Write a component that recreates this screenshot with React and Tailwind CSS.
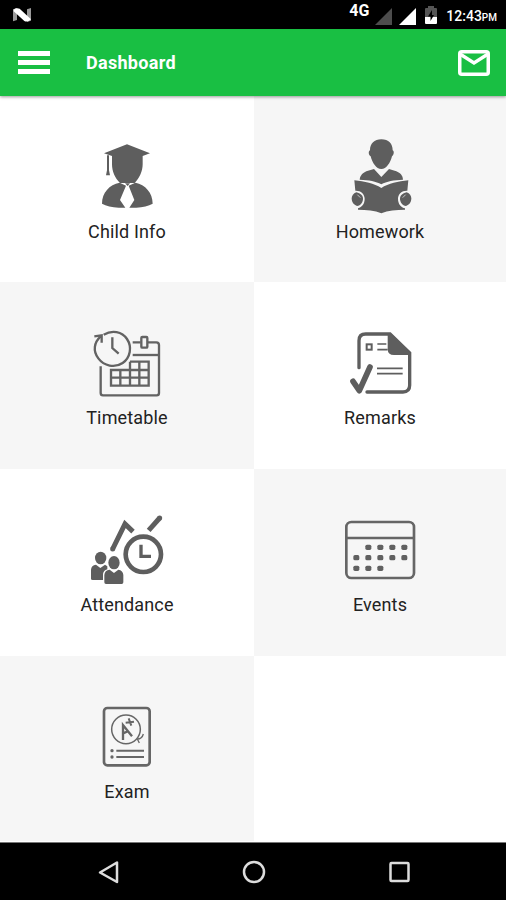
const ChildIcon = () => (
  <svg viewBox="3 0 300 270" className="h-[90px] w-[100px]" fill="#5e5e5e">
    <path d="M153 43 L222 70 L200 78 V103 C200 124 190 145 176 159 H132 C117 145 108 124 108 103 V78 L84 70 Z" />
    <path d="M93 76 H99 V121 L102 136 H90 L93 121 Z" />
    <path d="M131 158 L150 167 L132 210 L148 233 H128 C108 232 90 228 78 221 C78 188 100 164 131 158 Z" />
    <path d="M178 158 L158 167 L175 210 L160 233 H181 C200 232 218 228 230 221 C230 188 208 164 178 158 Z" />
    <path d="M147 160 H162 L155 168 Z" />
  </svg>
);

const HomeworkIcon = () => (
  <svg viewBox="0 0 300 270" className="h-[90px] w-[100px]" fill="#5e5e5e">
    <path d="M154 28 C176 28 188 41 188 61 C194 63 191 77 186 79 C181 99 169 117 154 117 C139 117 127 99 122 79 C116 77 114 63 120 61 C120 41 133 28 154 28 Z" />
    <path d="M132 117 L154 141 L177 117 L199 124 C211 129 219 137 219 149 C191 150 170 154 154 163 C138 154 117 150 89 149 C90 137 98 129 109 124 Z" />
    <path d="M73 151 C104 154 132 160 154 174 C176 160 204 154 235 151 L232 182 C216 181 204 192 204 206 C204 222 213 232 225 235 V239 C198 239 174 241 154 250 C134 241 110 239 84 239 V235 C96 231 104 221 104 206 C104 192 92 181 76 182 Z" />
    <path d="M79 187 C92 190 99 197 99 206 C99 217 92 226 81 228 C71 224 65 216 65 206 C65 197 70 190 79 187 Z" />
    <path d="M230 187 C217 190 210 197 210 206 C210 217 217 226 228 228 C238 224 244 216 244 206 C244 197 239 190 230 187 Z" />
    <path d="M82 194 L91 203 M227 194 L218 203" fill="none" stroke="#c4c4c4" strokeWidth="3" />
  </svg>
);

const TimetableIcon = () => (
  <svg viewBox="3 -12 300 270" className="h-[90px] w-[100px]" fill="none" stroke="#636363" strokeWidth="7">
    <path d="M83 44 C108 29 138 34 153 57 C169 81 163 113 140 129 C116 145 84 138 67 115 C50 93 54 67 74 49" />
    <path d="M55 49 L77 46 V68" />
    <path d="M109 52 V84 L128 101" />
    <path d="M74 139 V219 Q74 226 81 226 H242 Q249 226 249 219 V75 Q249 67 241 67 H216 M194 67 H170" />
    <rect x="196" y="51" width="18" height="32" rx="3" />
    <path d="M170 105 H249" />
    <path d="M162 125 H218 V197 H105 V150 H218 M105 173 H218 M133 150 V197 M162 125 V197 M190 125 V197" />
  </svg>
);

const RemarksIcon = () => (
  <svg viewBox="0 -12 300 270" className="h-[90px] w-[100px]" fill="none" stroke="#5e5e5e">
    <path d="M87 143 V62 Q87 42 107 42 H180 L239 99 V196 Q239 216 219 216 H111" strokeWidth="10" strokeLinecap="round" />
    <path d="M173 42 L185 42 L241 99 V105 H192 Q173 105 173 86 Z" fill="#5e5e5e" stroke="none" />
    <rect x="110" y="73" width="15" height="16" strokeWidth="6" />
    <path d="M142 72 H169 M142 89 H173 M141 145 H218 M141 161 H218" strokeWidth="5" />
    <path d="M69 184 L88 212 L120 141" strokeWidth="17" strokeLinecap="round" strokeLinejoin="round" />
  </svg>
);

const AttendanceIcon = () => (
  <svg viewBox="3 -6 300 270" className="h-[90px] w-[100px]" fill="none" stroke="#5e5e5e">
    <path d="M110 132 L147 57 L171 80" strokeWidth="15" />
    <circle cx="110" cy="132" r="7.5" fill="#5e5e5e" stroke="none" />
    <path d="M218 76 L251 39" strokeWidth="15" />
    <circle cx="251" cy="39" r="7.5" fill="#5e5e5e" stroke="none" />
    <circle cx="202" cy="148" r="53" strokeWidth="14" />
    <path d="M195 119 V154 H225" strokeWidth="10" />
    <g fill="#5e5e5e" stroke="none">
      <ellipse cx="74" cy="159" rx="17" ry="19" />
      <path d="M45 221 V194 Q46 181 60 179 L73 189 L87 179 L94 184 V193 Q82 197 81 207 V225 H50 Q45 225 45 221 Z" />
      <ellipse cx="114" cy="173" rx="17" ry="20" />
      <path d="M85 232 V210 Q86 195 101 194 L114 204 L127 194 Q141 196 142 210 V232 Q142 237 137 237 H90 Q85 237 85 232 Z" />
    </g>
  </svg>
);

const dots = [
  [115, 127], [151, 127], [187, 127], [223, 127],
  [79, 158], [115, 158], [151, 158], [187, 158], [223, 158],
  [79, 190], [115, 190], [151, 190],
];

const EventsIcon = () => (
  <svg viewBox="0 -6 300 270" className="h-[90px] w-[100px]" fill="none" stroke="#666" strokeWidth="8">
    <rect x="49" y="51" width="203" height="168" rx="15" />
    <path d="M49 99 H252" strokeWidth="7" />
    {dots.map(([x, y]) => (
      <rect key={`${x}-${y}`} x={x - 9} y={y - 8} width="18" height="16" rx="5" fill="#606060" stroke="none" />
    ))}
  </svg>
);

const ExamIcon = () => (
  <svg viewBox="3 -15 300 270" className="h-[90px] w-[100px]" fill="none" stroke="#666" strokeWidth="5">
    <rect x="84" y="39" width="137" height="172" rx="10" strokeWidth="8" />
    <circle cx="150" cy="103" r="43" strokeWidth="4.5" />
    <path d="M184 132 Q198 132 202 117 M184 132 L190 144" strokeWidth="4" />
    <path d="M141 135 V90 L168 124 M141 115 L158 108" strokeWidth="7" />
    <path d="M149 83 L174 80 M158 70 L166 92" strokeWidth="6" />
    <path d="M121 167 H204 M121 186 H204" strokeWidth="6" />
    <circle cx="108" cy="167" r="5" fill="#666" stroke="none" />
    <circle cx="108" cy="186" r="5" fill="#666" stroke="none" />
  </svg>
);

const tiles = [
  { label: 'Child Info', Icon: ChildIcon, bg: 'bg-white' },
  { label: 'Homework', Icon: HomeworkIcon, bg: 'bg-[#f6f6f6]' },
  { label: 'Timetable', Icon: TimetableIcon, bg: 'bg-[#f6f6f6]' },
  { label: 'Remarks', Icon: RemarksIcon, bg: 'bg-white' },
  { label: 'Attendance', Icon: AttendanceIcon, bg: 'bg-white' },
  { label: 'Events', Icon: EventsIcon, bg: 'bg-[#f6f6f6]' },
  { label: 'Exam', Icon: ExamIcon, bg: 'bg-[#f6f6f6]' },
];

const StatusBar = () => (
  <div className="flex h-[29px] items-start justify-between bg-black pr-[9px] pl-[13px] text-white">
    <svg viewBox="0 0 54 42" className="mt-2 h-[14px] w-[18px]">
      <path d="M0 4 L12 0 V36 L0 40 Z M42 4 L54 0 V38 L42 42 Z" fill="#999" />
      <path d="M2 5 Q10 -2 20 2 L54 34 Q44 44 34 39 L2 10 Z" fill="#fff" />
    </svg>
    <div className="flex items-start">
      <span className="mt-[3px] mr-[6px] text-[16px] leading-4 font-bold">4G</span>
      <svg viewBox="0 0 17 17" className="mt-2 mr-[7px] h-[17px] w-[17px]">
        <path d="M17 0 V17 H0 Z" fill="#4d4d4d" />
      </svg>
      <svg viewBox="0 0 17 17" className="mt-2 mr-[9px] h-[17px] w-[17px]">
        <path d="M17 0 V17 H0 Z" fill="#fff" />
      </svg>
      <svg viewBox="0 0 12 18" className="mt-[6px] mr-[9px] h-[18px] w-[12px]">
        <path d="M3 0 H9 V2 H11 Q12 2 12 3 V11 H0 V3 Q0 2 1 2 H3 Z" fill="#555" />
        <path d="M0 11 H12 V17 Q12 18 11 18 H1 Q0 18 0 17 Z" fill="#fff" />
        <path d="M7 4 L3 10.500 H5.500 V15 L9 9 H7 Z" fill="#000" />
      </svg>
      <span className="mt-2 text-[14px] leading-4 font-medium whitespace-nowrap">
        12:43<span className="text-[10px]">PM</span>
      </span>
    </div>
  </div>
);

const Header = () => (
  <header className="relative z-10 flex h-[67px] items-center bg-[#19bf43] pr-4 pl-[18px] text-white shadow-[0_1px_3px_rgba(0,0,0,0.4)]">
    <button className="flex w-8 flex-col gap-1" aria-label="Menu">
      <span className="h-[5px] w-8 bg-white" />
      <span className="h-[5px] w-8 bg-white" />
      <span className="h-[5px] w-8 bg-white" />
    </button>
    <h1 className="mt-px ml-9 text-[18px] leading-6 font-bold tracking-[0.3px]">Dashboard</h1>
    <svg viewBox="0 0 32 26" className="ml-auto h-[26px] w-8" fill="none" stroke="#fff" strokeWidth="3.5">
      <rect x="1.75" y="1.75" width="28.500" height="22.500" rx="2" />
      <path d="M2 4 L16 13 L30 4" />
    </svg>
  </header>
);

const NavBar = () => (
  <nav className="h-[58px] border-t border-[#777] bg-black">
    <svg viewBox="0 0 506 57" className="h-[57px] w-full" fill="none" stroke="#ddd" strokeWidth="2.500">
      <path d="M117 19.500 V39 L100 29.500 Z" strokeLinejoin="round" />
      <circle cx="254" cy="29" r="10" />
      <rect x="390.500" y="20" width="18" height="18" rx="1" />
    </svg>
  </nav>
);

const App = () => {
  return (
    <div className="flex h-[900px] w-[506px] flex-col overflow-hidden bg-white font-[Roboto,sans-serif]">
      <StatusBar />
      <Header />
      <main className="grid h-[746px] grid-cols-[254px_252px] grid-rows-[186px_187px_187px_185px]">
        {tiles.map(({ label, Icon, bg }) => (
          <div key={label} className={`flex flex-col items-center pt-[34px] ${bg}`}>
            <Icon />
            <p className="text-[18px] leading-6 tracking-[0.15px] text-[#222]">{label}</p>
          </div>
        ))}
      </main>
      <NavBar />
    </div>
  );
};

export default App;
